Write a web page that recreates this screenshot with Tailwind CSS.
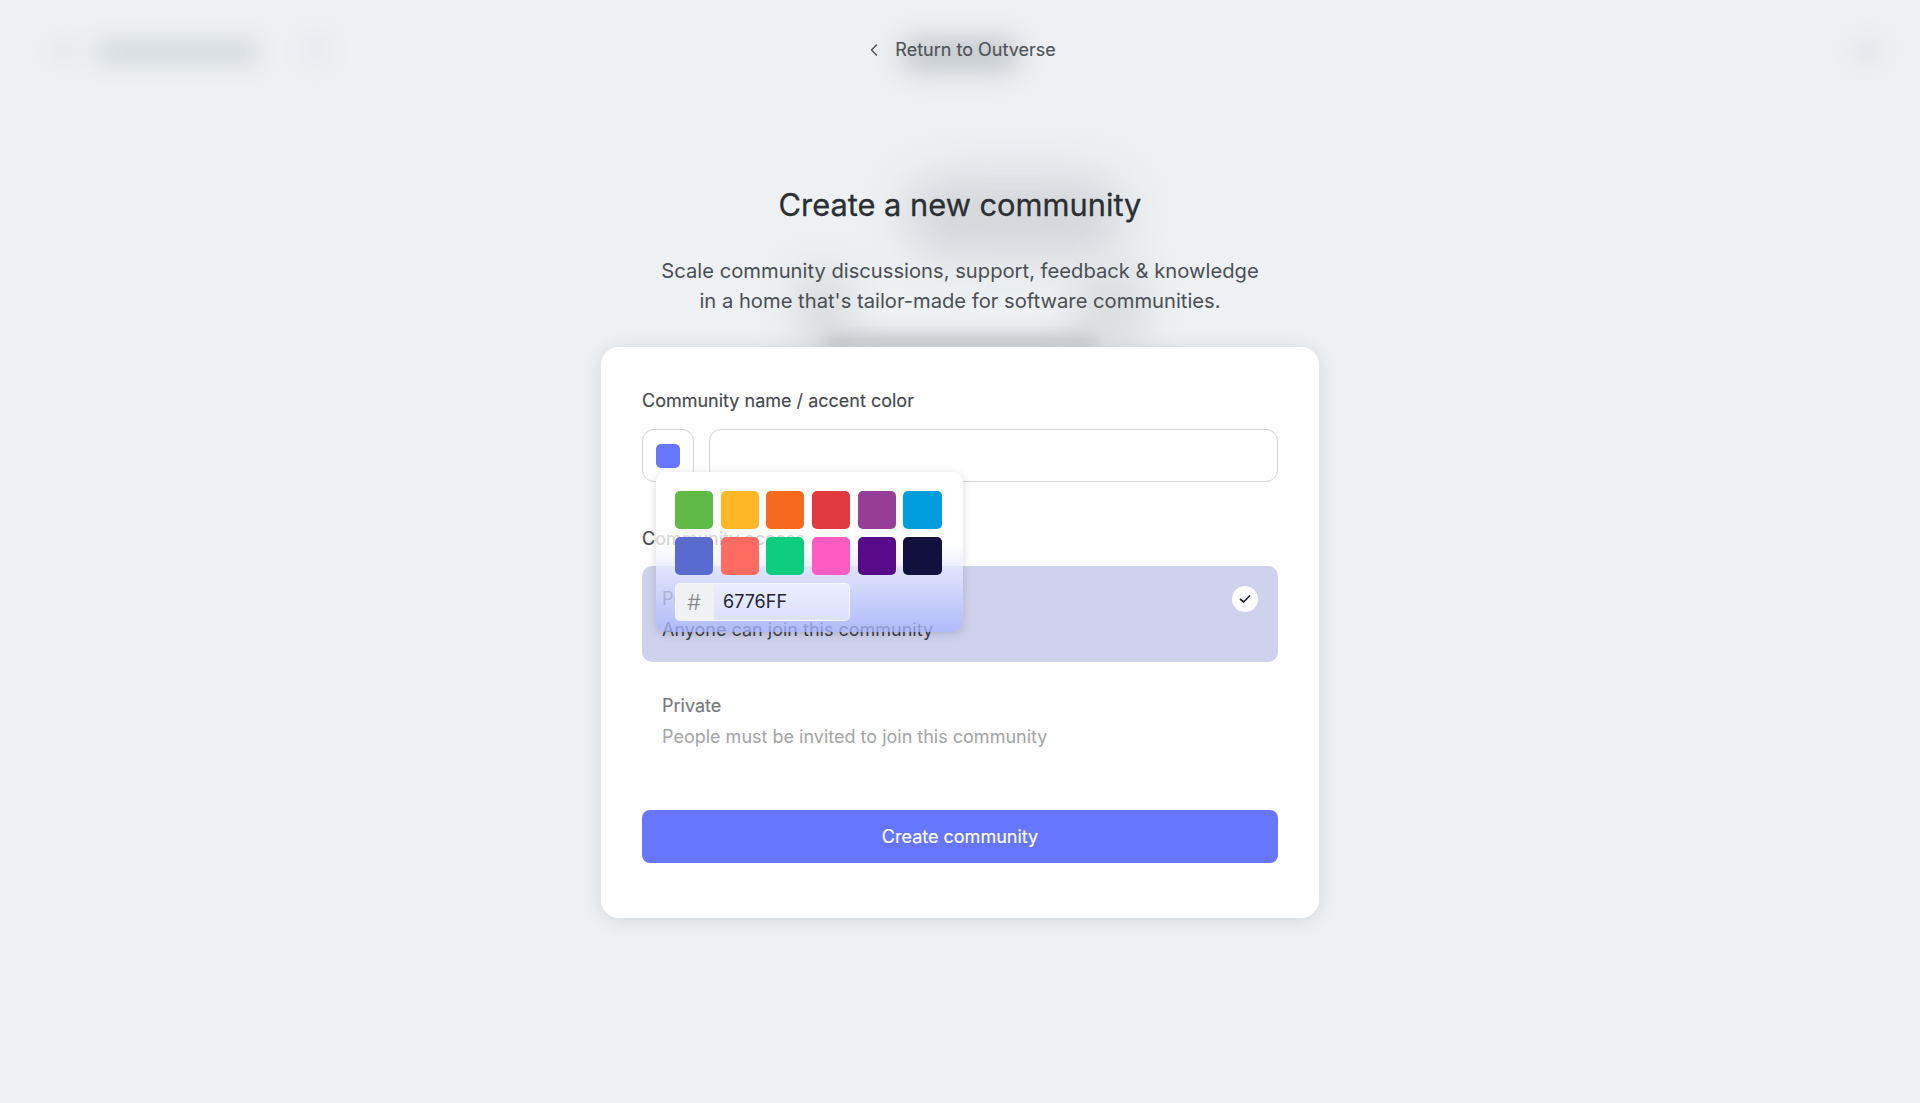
<!DOCTYPE html>
<html lang="en">
<head>
    <meta charset="UTF-8">
    <meta name="viewport" content="width=device-width, initial-scale=1.0">
    <title>Create a new community</title>
    <script src="https://cdn.jsdelivr.net/npm/@tailwindcss/browser@4"></script>
</head>
<body class="bg-[#edf1f4] [font-family:Inter,sans-serif] text-[#4b4f54]">
<div class="relative h-[1103px] overflow-hidden flex flex-col items-center">

    <!-- blurred ghost content behind the page -->
    <div class="absolute left-[52px] top-[44px] w-[26px] h-[14px] bg-[#e2e5e1] blur-[10px]"></div>
    <div class="absolute left-[96px] top-[40px] w-[162px] h-[24px] bg-[#d5dade] blur-[11px]"></div>
    <div class="absolute left-[302px] top-[36px] w-[28px] h-[28px] bg-[#e6eaee] blur-[10px]"></div>
    <div class="absolute left-[1853px] top-[38px] w-[28px] h-[26px] rounded-full bg-[#e0e4e8] blur-[11px]"></div>
    <div class="absolute left-[900px] top-[40px] w-[120px] h-[30px] rounded-full bg-[#bfc4c9] blur-[14px]"></div>
    <div class="absolute left-[905px] top-[178px] w-[220px] h-[78px] rounded-full bg-[#d2d6da] blur-[24px]"></div>
    <div class="absolute left-[795px] top-[270px] w-[55px] h-[80px] bg-[#dadee1] blur-[18px]"></div>
    <div class="absolute left-[1075px] top-[270px] w-[70px] h-[80px] bg-[#dadee1] blur-[18px]"></div>
    <div class="absolute left-[825px] top-[334px] w-[270px] h-[16px] bg-[#c0c4c8] blur-[9px]"></div>

    <header class="relative h-[100px] pl-[4px] flex items-center justify-center shrink-0">
        <a href="#" class="flex items-center gap-[15px] text-[18px] leading-6 [-webkit-text-stroke:0.15px_currentColor] text-[#4f5357]">
            <svg class="w-[12px] h-[14px]" viewBox="0 0 12 14" fill="none" stroke="#4f5357" stroke-width="1.5" stroke-linecap="round" stroke-linejoin="round"><path d="M8.5 2 3.5 7l5 5"/></svg>
            Return to Outverse
        </a>
    </header>

    <div class="relative text-center">
        <h1 class="mt-[83px] text-[30.8px] leading-[44px] font-normal [-webkit-text-stroke:0.3px_currentColor] text-[#2b2e32]">Create a new community</h1>
        <p class="mt-[29px] text-[20.2px] leading-[30px] text-[#4b4f54]">Scale community discussions, support, feedback &amp; knowledge<br>in a home that's tailor-made for software communities.</p>
    </div>

    <main class="relative mt-[31px] w-[718px] h-[571px] bg-white rounded-[18px] shadow-[0_2px_20px_rgba(0,0,0,0.11)] px-[41px] pt-[42px]">
        <label class="block text-[18px] leading-6 [-webkit-text-stroke:0.15px_currentColor] text-[#46494d] mb-[16px]">Community name / accent color</label>
        <div class="flex gap-[15px]">
            <button class="w-[52px] h-[53px] rounded-xl border border-[#d4d4d6] flex items-center justify-center">
                <span class="block w-[24px] h-[24px] rounded-[5px] bg-[#6776ff]"></span>
            </button>
            <input type="text" class="flex-1 h-[53px] rounded-xl border border-[#d4d4d6]">
        </div>

        <label class="block mt-[45px] text-[18px] leading-6 [-webkit-text-stroke:0.15px_currentColor] text-[#46494d] mb-[15px]">Community access</label>
        <div class="relative h-[96px] rounded-[10px] bg-[#cfd2ec] px-[20px] pt-[18px]">
            <div class="text-[18px] leading-[30px] [-webkit-text-stroke:0.15px_currentColor] text-[#46494d]">Public</div>
            <div class="mt-px text-[18px] leading-[30px] text-[#3c3f47]">Anyone can join this community</div>
            <span class="absolute right-[20px] top-[20px] w-[26px] h-[26px] rounded-full bg-white flex items-center justify-center">
                <svg class="w-[14px] h-[14px]" viewBox="0 0 14 14" fill="none" stroke="#1f2126" stroke-width="1.7" stroke-linecap="round" stroke-linejoin="round"><path d="M2.5 7.3 5.6 10l5.9-6"/></svg>
            </span>
        </div>
        <div class="mt-[11px] h-[96px] px-[20px] pt-[18px]">
            <div class="text-[18px] leading-[30px] [-webkit-text-stroke:0.15px_currentColor] text-[#77797c]">Private</div>
            <div class="mt-px text-[18px] leading-[30px] text-[#a3a5a7]">People must be invited to join this community</div>
        </div>

        <button class="mt-[41px] w-full h-[53px] rounded-lg bg-[#6776ff] text-white text-[18px] [-webkit-text-stroke:0.15px_currentColor]">Create community</button>

        <!-- colour picker popover -->
        <div class="absolute left-[55px] top-[125px] w-[307px] h-[160px] rounded-[10px] p-[19px] bg-linear-to-b from-white via-white/75 via-45% to-[#a5b3ff]/75 shadow-[0_2px_10px_rgba(0,0,0,0.16)]">
            <div class="grid grid-cols-6 gap-x-[7.7px] gap-y-[8px] w-[266.5px]">
                <span class="h-[38px] rounded-[5px] bg-[#5fbb46]"></span>
                <span class="h-[38px] rounded-[5px] bg-[#ffb627]"></span>
                <span class="h-[38px] rounded-[5px] bg-[#f6691e]"></span>
                <span class="h-[38px] rounded-[5px] bg-[#e03a3e]"></span>
                <span class="h-[38px] rounded-[5px] bg-[#963d97]"></span>
                <span class="h-[38px] rounded-[5px] bg-[#009ddc]"></span>
                <span class="h-[38px] rounded-[5px] bg-[#5a6bd0]"></span>
                <span class="h-[38px] rounded-[5px] bg-[#ff6b61]"></span>
                <span class="h-[38px] rounded-[5px] bg-[#0cce7e]"></span>
                <span class="h-[38px] rounded-[5px] bg-[#ff5cc3]"></span>
                <span class="h-[38px] rounded-[5px] bg-[#590a8a]"></span>
                <span class="h-[38px] rounded-[5px] bg-[#12103c]"></span>
            </div>
            <div class="mt-[8px] w-[175px] h-[38px] rounded-[5px] border border-white/70 bg-white/50 flex overflow-hidden">
                <span class="w-[38px] pr-[2px] bg-[#f0f1f2] flex items-center justify-center text-[22px] font-light text-[#85898d]">#</span>
                <span class="pl-[9px] text-[18px] leading-[36px] text-[#1f2230]">6776FF</span>
            </div>
        </div>
    </main>
</div>
</body>
</html>
